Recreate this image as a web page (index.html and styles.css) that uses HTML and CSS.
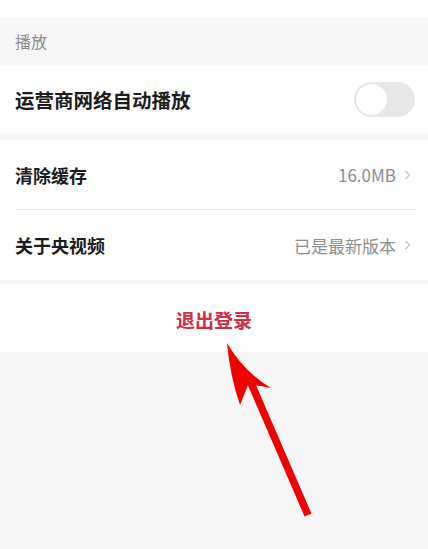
FILE: index.html
```html
<!DOCTYPE html>
<html lang="zh-CN">
<head>
<meta charset="utf-8">
<link rel="stylesheet" href="styles.css">
</head>
<body>
<div class="page">
  <div class="top"></div>
  <div class="section-label">播放</div>
  <div class="card">
    <div class="row">
      <span class="row-title big">运营商网络自动播放</span>
      <span class="switch"><span class="knob"></span></span>
    </div>
  </div>
  <div class="gap7"></div>
  <div class="card">
    <div class="row r1">
      <span class="row-title">清除缓存</span>
      <span class="row-value">16.0MB<svg class="chev" width="7" height="12" viewBox="0 0 7 12"><path d="M1.5 2 L5.5 6 L1.5 10" fill="none" stroke="#c8c8c8" stroke-width="1.4"/></svg></span>
    </div>
    <div class="divider"></div>
    <div class="row r2">
      <span class="row-title">关于央视频</span>
      <span class="row-value">已是最新版本<svg class="chev" width="7" height="12" viewBox="0 0 7 12"><path d="M1.5 2 L5.5 6 L1.5 10" fill="none" stroke="#c8c8c8" stroke-width="1.4"/></svg></span>
    </div>
  </div>
  <div class="gap4"></div>
  <div class="card logout">退出登录</div>
  <svg class="arrow" width="428" height="549" viewBox="0 0 428 549">
    <line x1="251" y1="383" x2="308" y2="515" stroke="#f20000" stroke-width="7.5"/>
    <path d="M227 343 Q 244 372 271 388 Q 258 385 248 385 L 240 405 Q 230 376 227 343 Z" fill="#f20000"/>
  </svg>
</div>
</body>
</html>
```
FILE: styles.css
```css
html, body {
  margin: 0;
  padding: 0;
}
body {
  background: #f7f7f8;
  font-family: "Noto Sans CJK SC", "Noto Sans", sans-serif;
}
.page {
  position: relative;
  width: 428px;
  height: 549px;
  overflow: hidden;
}
.top {
  height: 17px;
  background: #fff;
}
.section-label {
  height: 48px;
  padding-left: 15px;
  display: flex;
  align-items: center;
  font-size: 16px;
  color: #8a8a8a;
}
.card {
  background: #fff;
}
.row {
  height: 68px;
  padding: 0 13px 0 15px;
  display: flex;
  align-items: center;
  justify-content: space-between;
}
.r1, .r2 {
  padding-right: 17px;
}
.r1 { height: 69px; }
.r2 { height: 70px; }
.row-title {
  font-size: 18px;
  font-weight: 700;
  color: #1c1c1e;
}
.row-title.big {
  font-size: 19.5px;
}
.row-value {
  display: flex;
  align-items: center;
  gap: 8px;
  font-size: 17px;
  color: #8e8e8e;
}
.chev {
  display: block;
}
.switch {
  width: 61px;
  height: 35px;
  border-radius: 18px;
  background: #e8e8e8;
  display: flex;
  align-items: center;
  padding-left: 2px;
  box-sizing: border-box;
}
.knob {
  width: 31px;
  height: 31px;
  border-radius: 50%;
  background: #fff;
  box-shadow: 0 0 1px rgba(0,0,0,0.08);
}
.divider {
  height: 1px;
  margin: 0 12px 0 16px;
  background: #ececec;
}
.gap7 { height: 7px; }
.gap4 { height: 4px; }
.logout {
  height: 68px;
  box-sizing: border-box;
  padding-top: 3px;
  display: flex;
  align-items: center;
  justify-content: center;
  font-size: 19px;
  font-weight: 700;
  color: #d62c45;
}
.arrow {
  position: absolute;
  left: 0;
  top: 0;
  pointer-events: none;
}
```
